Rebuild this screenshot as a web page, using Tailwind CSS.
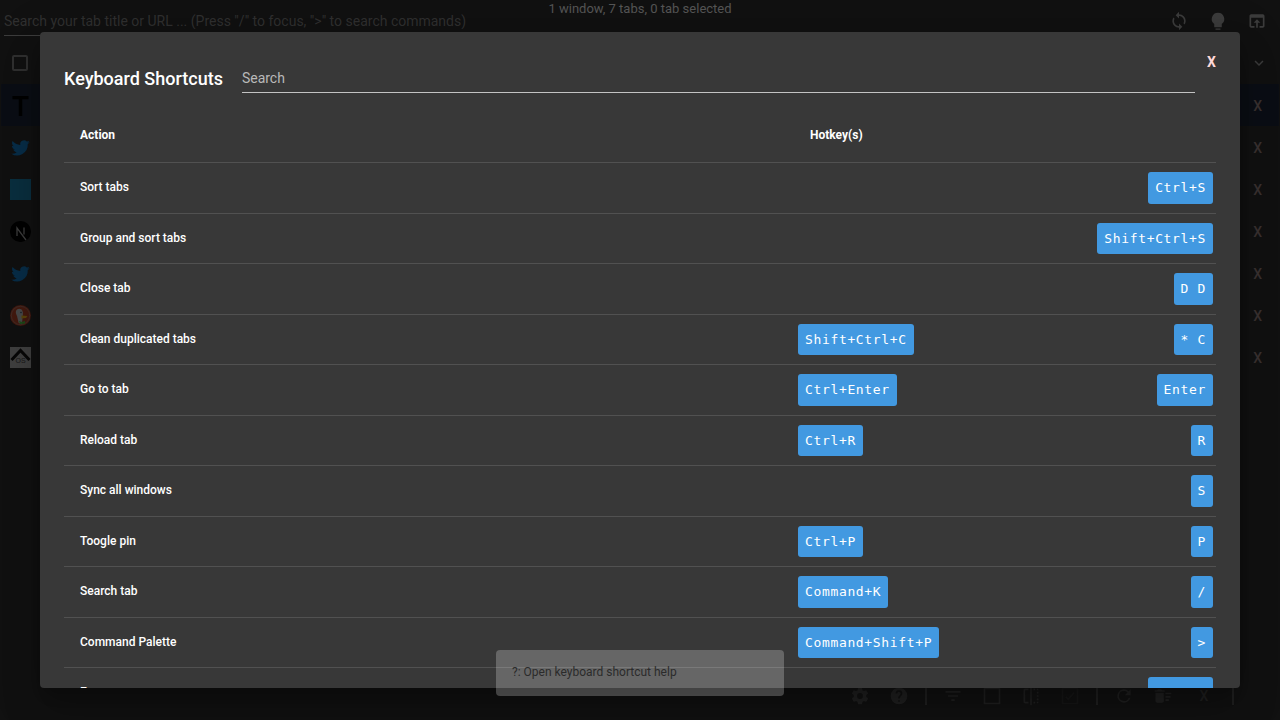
<!DOCTYPE html>
<html lang="en">
<head>
<meta charset="utf-8">
<meta name="viewport" content="width=device-width, initial-scale=1">
<title>Keyboard Shortcuts</title>
<script src="https://cdn.jsdelivr.net/npm/@tailwindcss/browser@4"></script>
</head>
<body class="h-screen overflow-hidden bg-[#111111] font-['Roboto',sans-serif]">
<svg class="hidden" aria-hidden="true">
  <symbol id="bird" viewBox="0 0 24 24"><path d="M22.5 5.9c-.8.3-1.6.6-2.5.7.9-.5 1.6-1.4 1.9-2.4-.8.5-1.8.9-2.7 1a4.3 4.3 0 0 0-7.4 3.9C8.200 9 5 7.200 2.900 4.700c-1.100 2-.6 4.500 1.300 5.800-.7 0-1.400-.2-2-.5 0 2.100 1.500 3.800 3.500 4.300-.6.2-1.300.2-2 .1.600 1.700 2.200 2.900 4 3A8.700 8.700 0 0 1 1.500 19.100 12.200 12.200 0 0 0 20.300 8.100c.9-.6 1.600-1.300 2.200-2.200z"/></symbol>
</svg>

<div class="relative flex h-full flex-col">
  <header class="flex h-[42px] shrink-0 items-center px-1 text-[#303030]">
    <input type="text" aria-label="Search tabs" placeholder="Search your tab title or URL ... (Press &quot;/&quot; to focus, &quot;&gt;&quot; to search commands)" class="mr-5 h-[30px] min-w-0 flex-1 self-end mb-[6px] border-b border-[#3c3c3c] bg-transparent text-[14px] placeholder:text-[#303030] outline-none">
    <div class="flex gap-[19px] pr-[9px] text-[#3c3c3c]">
      <button aria-label="Sync all windows"><svg class="size-5" viewBox="0 0 24 24" fill="currentColor"><path d="M12 4V1L8 5l4 4V6c3.310 0 6 2.690 6 6 0 1.010-.25 1.970-.7 2.800l1.460 1.460A7.930 7.930 0 0 0 20 12c0-4.420-3.580-8-8-8zm0 14c-3.310 0-6-2.690-6-6 0-1.010.25-1.970.7-2.800L5.240 7.740A7.930 7.930 0 0 0 4 12c0 4.420 3.580 8 8 8v3l4-4-4-4v3z"/></svg></button>
      <button aria-label="Toggle theme"><svg class="size-5" viewBox="0 0 24 24" fill="currentColor"><path d="M9 21h6v1.500H9zM12 2a7.500 7.500 0 0 0-4.500 13.500V19.500h9V15.500A7.500 7.500 0 0 0 12 2z"/></svg></button>
      <button aria-label="Open in new window"><svg class="size-5" viewBox="0 0 24 24" fill="currentColor"><path d="M19 4H5c-1.110 0-2 .9-2 2v12c0 1.100.89 2 2 2h4v-2H5V8h14v10h-4v2h4c1.100 0 2-.9 2-2V6c0-1.100-.89-2-2-2zm-7 6l-4 4h3v6h2v-6h3l-4-4z"/></svg></button>
    </div>
  </header>
  <p class="absolute inset-x-0 top-0 text-center text-[13px] leading-[18px] text-[#555555]">1 window, 7 tabs, 0 tab selected</p>

  <main class="flex-1 text-[#3a3231]">
    <div class="flex h-[42px] items-center justify-between pr-3 pl-[10px]">
      <input type="checkbox" aria-label="Select all tabs" class="ml-[2px] size-4 appearance-none rounded-[2px] border-2 border-[#303030]">
      <button aria-label="Collapse window" class="text-[#3c3c3c]"><svg class="size-[18px]" viewBox="0 0 24 24" fill="currentColor"><path d="M16.600 8.600L12 13.200 7.400 8.600 6 10l6 6 6-6z"/></svg></button>
    </div>
    <ul class="text-[14px] font-medium [&_button]:mr-2 [&_button]:pt-[2px]">
      <li class="mx-px flex h-[42px] items-center justify-between bg-[#0b0e15] px-[9px]"><svg class="size-[21px]" viewBox="0 0 21 21"><path fill="#000" d="M2.500 1h16v3.200h-6.300V21H8.800V4.200H2.500z"/></svg><button aria-label="Close tab">X</button></li>
      <li class="flex h-[42px] items-center justify-between px-[10px]"><svg class="size-[21px]" fill="#082d48"><use href="#bird"/></svg><button aria-label="Close tab">X</button></li>
      <li class="flex h-[42px] items-center justify-between px-[10px]"><span class="size-[21px] bg-[#0a2f3f]"></span><button aria-label="Close tab">X</button></li>
      <li class="flex h-[42px] items-center justify-between px-[10px]"><svg class="size-[21px]" viewBox="0 0 21 21" fill="none"><circle cx="10.500" cy="10.500" r="10.500" fill="#000"/><path d="M7 15V7l9 12M14 6.500v7" stroke="#3d3d3d" stroke-width="1.300"/></svg><button aria-label="Close tab">X</button></li>
      <li class="flex h-[42px] items-center justify-between px-[10px]"><svg class="size-[21px]" fill="#082d48"><use href="#bird"/></svg><button aria-label="Close tab">X</button></li>
      <li class="flex h-[42px] items-center justify-between px-[10px]"><svg class="size-[21px]" viewBox="0 0 21 21"><circle cx="10.500" cy="10.500" r="10.500" fill="#43190f"/><circle cx="10.500" cy="10.500" r="9.200" fill="none" stroke="#40302b" stroke-width=".8"/><path fill="#484848" d="M6 6c1-3 5.500-3 6.500 0 1 2 .2 4 .2 6l-.7 6.500c-1.500.5-3 0-3.500-1L7 11C6 9 5.500 7.500 6 6z"/><path fill="#5a440a" d="M11.500 10.500l6 .5-1.500 2-4.500.5z"/><path fill="#1c4a18" d="M9 16l3 1 3-1v2.500l-5 .5z"/><circle cx="11" cy="7.500" r=".8" fill="#16222a"/></svg><button aria-label="Close tab">X</button></li>
      <li class="flex h-[42px] items-center justify-between px-[10px]"><svg class="size-[21px]" viewBox="0 0 21 21"><path fill="#404040" d="M0 0h21v21H0z"/><path fill="none" stroke="#080808" stroke-width="3" d="M1.500 13L10.500 3.500 19.500 13"/><text x="10.500" y="15.500" text-anchor="middle" font-size="7" font-family="Liberation Sans, sans-serif" fill="#181818">OS</text></svg><button aria-label="Close tab">X</button></li>
    </ul>
  </main>

  <footer class="flex h-12 shrink-0 items-center justify-end gap-[19px] pr-[46px] text-[#202020]">
    <button aria-label="Settings"><svg class="size-5" viewBox="0 0 24 24" fill="currentColor"><path d="M19.430 12.980c.04-.32.07-.64.07-.98s-.03-.66-.07-.98l2.110-1.650c.19-.15.24-.42.12-.64l-2-3.460c-.12-.22-.39-.3-.61-.22l-2.490 1c-.52-.4-1.080-.73-1.690-.98l-.38-2.650A.49.49 0 0 0 14 2h-4c-.25 0-.46.18-.49.420l-.38 2.650c-.61.25-1.170.59-1.690.98l-2.490-1c-.23-.09-.49 0-.61.22l-2 3.460c-.13.22-.07.49.12.64l2.110 1.650c-.04.32-.07.65-.07.98s.03.66.07.98l-2.110 1.650c-.19.15-.24.42-.12.64l2 3.460c.12.22.39.3.61.22l2.490-1c.52.4 1.080.73 1.690.98l.38 2.650c.03.24.24.42.49.42h4c.25 0 .46-.18.49-.42l.38-2.650c.61-.25 1.170-.59 1.690-.98l2.490 1c.23.09.49 0 .61-.22l2-3.460c.12-.22.07-.49-.12-.64l-2.110-1.650zM12 15.500a3.500 3.500 0 1 1 0-7 3.500 3.500 0 0 1 0 7z"/></svg></button>
    <button aria-label="Help"><svg class="size-5" viewBox="0 0 24 24" fill="currentColor"><path d="M12 2a10 10 0 1 0 0 20 10 10 0 0 0 0-20zm1 17h-2v-2h2v2zm2.070-7.750l-.9.920C13.450 12.900 13 13.500 13 15h-2v-.5c0-1.100.45-2.100 1.170-2.830l1.240-1.260A2 2 0 1 0 10 9H8a4 4 0 1 1 8 0c0 .88-.36 1.680-.93 2.250z"/></svg></button>
    <span class="-mx-[3px] h-[18px] w-[2px] bg-current"></span>
    <button aria-label="Sort tabs"><svg class="size-5" viewBox="0 0 24 24" fill="currentColor"><path d="M10 18h4v-2h-4v2zM3 6v2h18V6H3zm3 7h12v-2H6v2z"/></svg></button>
    <button aria-label="Select"><svg class="size-5" viewBox="0 0 24 24" fill="none" stroke="currentColor" stroke-width="2"><path d="M3 3h18v18H3z"/></svg></button>
    <button aria-label="Flip selection"><svg class="size-5" viewBox="0 0 24 24" fill="currentColor"><path d="M15 21h2v-2h-2v2zm4-12h2V7h-2v2zM3 5v14c0 1.100.9 2 2 2h4v-2H5V5h4V3H5c-1.100 0-2 .9-2 2zm16-2v2h2c0-1.100-.9-2-2-2zm-8 20h2V1h-2v22zm8-6h2v-2h-2v2zM15 5h2V3h-2v2zm4 8h2v-2h-2v2zm0 8c1.100 0 2-.9 2-2h-2v2z"/></svg></button>
    <button aria-label="Select matches" class="text-[#171717]"><svg class="size-5" viewBox="0 0 24 24" fill="none" stroke="currentColor" stroke-width="2"><path d="M3 3h18v18H3zM7 13l3 3 7-8"/></svg></button>
    <span class="-mx-[3px] h-[18px] w-[2px] bg-current"></span>
    <button aria-label="Reload"><svg class="size-5" viewBox="0 0 24 24" fill="currentColor"><path d="M17.650 6.350A8 8 0 1 0 19.730 14h-2.080A6 6 0 1 1 12 6c1.660 0 3.140.69 4.220 1.780L13 11h7V4l-2.350 2.350z"/></svg></button>
    <button aria-label="Clean duplicated tabs"><svg class="size-5" viewBox="0 0 24 24" fill="currentColor"><path d="M15 16h4v2h-4zm0-8h7v2h-7zm0 4h6v2h-6zM3 18c0 1.100.9 2 2 2h6c1.100 0 2-.9 2-2V8H3v10zM14 5h-3l-1-1H6L5 5H2v2h12z"/></svg></button>
    <button aria-label="Close selected" class="ml-[2px] w-5 text-[14px] font-medium">X</button>
    <span class="-ml-[1px] h-[18px] w-[2px] bg-current"></span>
  </footer>

  <section role="dialog" aria-labelledby="dialog-title" class="absolute inset-x-10 top-8 bottom-8 overflow-hidden rounded bg-[#383838] px-6 text-white shadow-[0_11px_15px_-7px_rgba(0,0,0,0.2),0_24px_38px_3px_rgba(0,0,0,0.14),0_9px_46px_8px_rgba(0,0,0,0.12)]">
    <div class="flex h-[75px] items-start">
      <h2 id="dialog-title" class="pt-[35px] text-[18px] leading-6 font-medium">Keyboard Shortcuts</h2>
      <input type="search" aria-label="Search" placeholder="Search" class="mt-[31px] ml-[19px] h-[30px] min-w-0 flex-1 border-b border-[#c3c3c3] bg-transparent text-[14px] placeholder:text-[#b9b9b9] outline-none">
      <button aria-label="Close" class="mt-5 w-[21px] pl-[12px] text-[14px] leading-5 font-bold text-[#ffd9d9]">X</button>
    </div>
    <table class="w-full table-fixed border-separate border-spacing-0 text-left text-[12px] [&_td]:border-b [&_td]:border-[#515151] [&_th]:border-b [&_th]:border-[#515151] [&_td]:p-0 [&_td:first-child]:px-4 [&_td:first-child]:pb-[2px] [&_kbd]:flex [&_kbd]:h-8 [&_tr:nth-child(even)_kbd]:h-[31px] [&_kbd]:items-center [&_kbd]:rounded-[3px] [&_kbd]:bg-[#4299e1] [&_kbd]:px-[7px] [&_kbd]:font-['DejaVu_Sans_Mono',monospace] [&_kbd]:text-[13px] [&_kbd]:tracking-wider [&_td>div]:mr-[3px] [&_td>div]:ml-1 [&_td>div]:flex [&_td>div]:flex-row-reverse [&_td>div]:justify-between">
      <thead><tr class="h-14"><th scope="col" class="px-4 font-bold">Action</th><th scope="col" class="w-[422px] px-4 font-bold">Hotkey(s)</th></tr></thead>
      <tbody class="font-medium [&>tr]:h-[51px] [&>tr:nth-child(even)]:h-[50px]">
        <tr><td>Sort tabs</td><td><div><kbd>Ctrl+S</kbd></div></td></tr>
        <tr><td>Group and sort tabs</td><td><div><kbd>Shift+Ctrl+S</kbd></div></td></tr>
        <tr><td>Close tab</td><td><div><kbd>D D</kbd></div></td></tr>
        <tr><td>Clean duplicated tabs</td><td><div><kbd>* C</kbd><kbd>Shift+Ctrl+C</kbd></div></td></tr>
        <tr><td>Go to tab</td><td><div><kbd>Enter</kbd><kbd>Ctrl+Enter</kbd></div></td></tr>
        <tr><td>Reload tab</td><td><div><kbd>R</kbd><kbd>Ctrl+R</kbd></div></td></tr>
        <tr><td>Sync all windows</td><td><div><kbd>S</kbd></div></td></tr>
        <tr><td>Toogle pin</td><td><div><kbd>P</kbd><kbd>Ctrl+P</kbd></div></td></tr>
        <tr><td>Search tab</td><td><div><kbd>/</kbd><kbd>Command+K</kbd></div></td></tr>
        <tr><td>Command Palette</td><td><div><kbd>&gt;</kbd><kbd>Command+Shift+P</kbd></div></td></tr>
        <tr><td>Escape</td><td><div><kbd>Escape</kbd></div></td></tr>
      </tbody>
    </table>
  </section>

  <div role="status" class="absolute bottom-6 left-1/2 w-[288px] -translate-x-1/2 rounded bg-white/23 px-4 pt-3 pb-[14px] text-[12px] leading-5 text-[#2b2b2b]">?: Open keyboard shortcut help</div>
</div>
</body>
</html>
